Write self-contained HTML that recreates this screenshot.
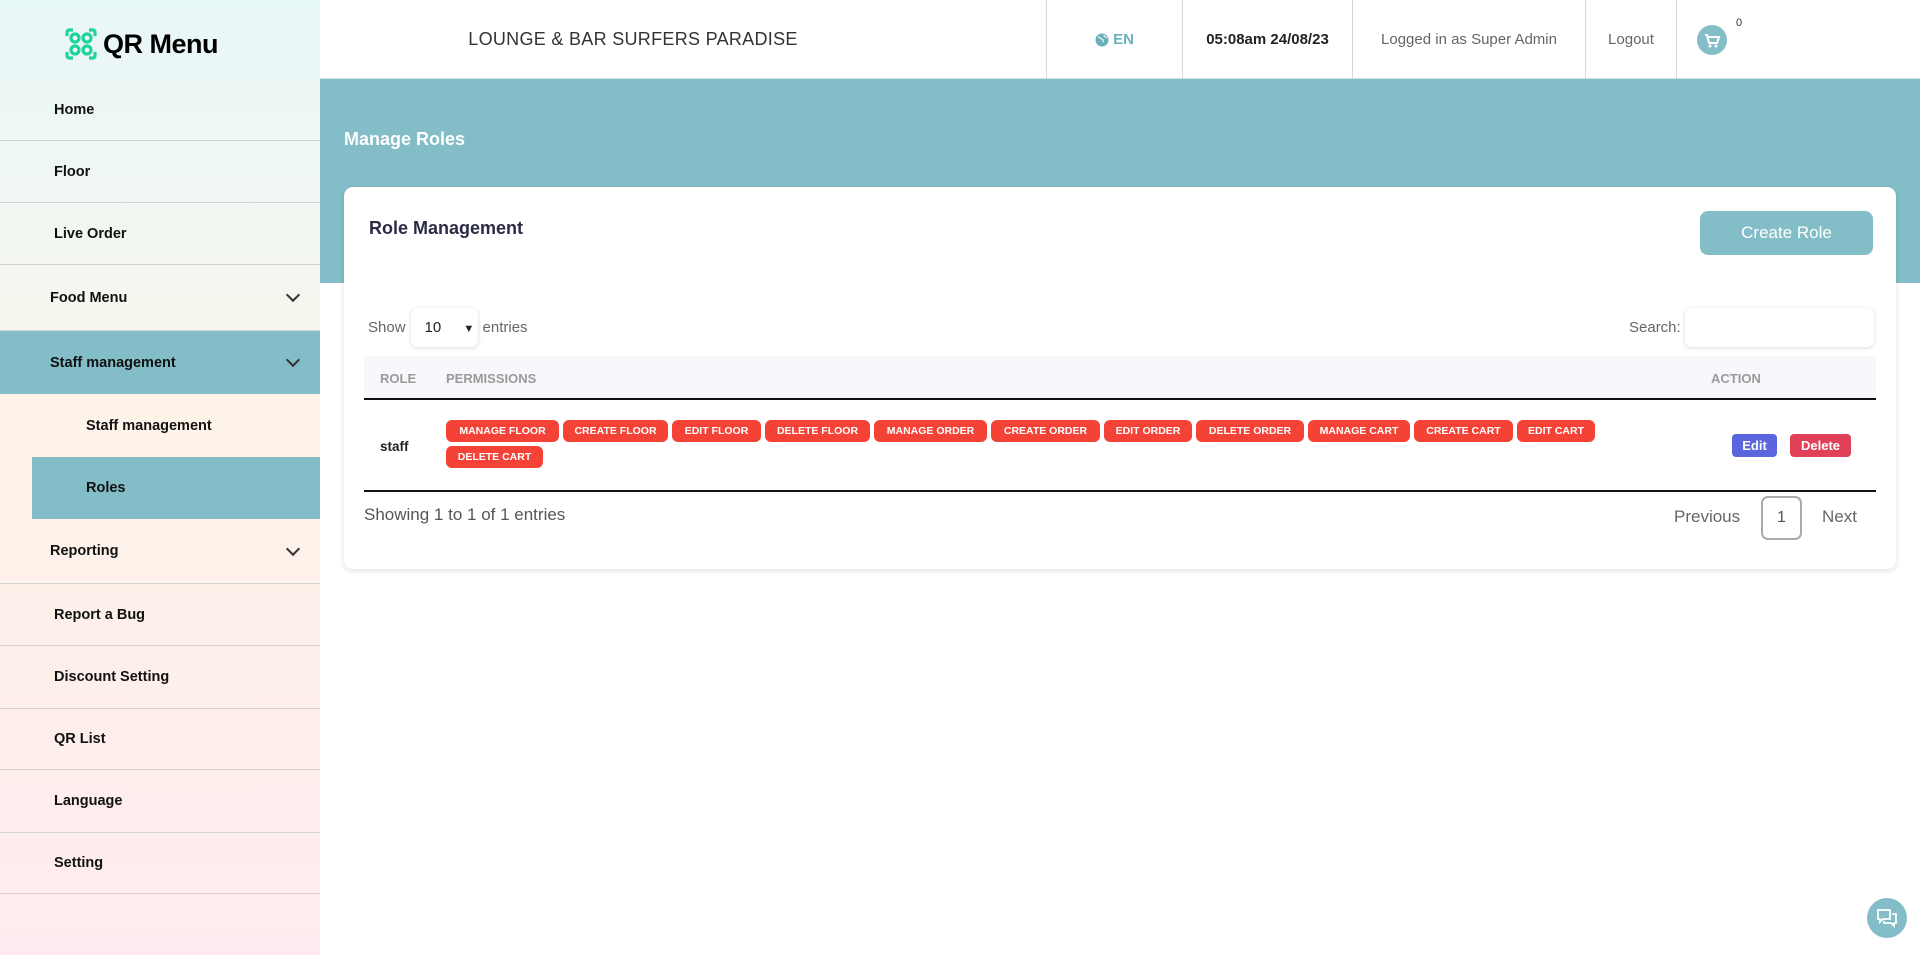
<!DOCTYPE html>
<html><head><meta charset="utf-8"><style>
*{box-sizing:border-box;margin:0;padding:0}
body{width:1920px;height:955px;overflow:hidden;font-family:"Liberation Sans",sans-serif;background:#fff;position:relative}
.sb{position:absolute;left:0;top:0;width:320px;height:955px;background:linear-gradient(#e8f7f8 0%,#f4f7ef 30%,#fdf4ea 45%,#fdefea 70%,#ffebef 100%)}
.logo{position:absolute;left:65px;top:28px;font-size:27px;font-weight:900;color:#000;display:flex;align-items:center;gap:6px;letter-spacing:-0.5px}
.it{position:absolute;left:0;width:320px;border-bottom:1px solid #d4d4d4;font-size:14.5px;font-weight:600;color:#111;display:flex;align-items:center;padding-left:54px}
.it.d{padding-left:50px}
.chev{position:absolute;left:288px;width:10px;height:10px;border-right:2px solid #333;border-bottom:2px solid #333;transform:rotate(45deg);margin-top:-5px}
.hdr{position:absolute;left:320px;top:0;width:1600px;height:79px;border-bottom:1px solid #cfdfe2;background:#fff}
.hc{position:absolute;top:0;height:79px;display:flex;align-items:center;justify-content:center;font-size:15px;border-left:1px solid #d5d9dc}
.band{position:absolute;left:320px;top:79px;width:1600px;height:204px;background:#83bdc7}
.card{position:absolute;left:344px;top:187px;width:1552px;height:382px;background:#fff;border-radius:9px;box-shadow:0 2px 6px rgba(0,0,0,.12)}
.bd{display:inline-block;height:22px;line-height:22px;background:#f44336;color:#fff;font-size:10.5px;font-weight:700;text-align:center;border-radius:6px;margin-right:4px;vertical-align:top}
</style></head><body>
<div class="sb">
<div class="logo"><svg width="32" height="32" viewBox="0 0 32 32" fill="none" stroke="#1fd39a" stroke-width="3.2"><circle cx="10" cy="10" r="4"/><circle cx="22" cy="10" r="4"/><circle cx="10" cy="22" r="4"/><circle cx="22" cy="22" r="4"/><path d="M2 8V4a2 2 0 0 1 2-2h4M24 2h4a2 2 0 0 1 2 2v4M30 24v4a2 2 0 0 1-2 2h-4M8 30H4a2 2 0 0 1-2-2v-4"/></svg>QR Menu</div>
<div class="it" style="top:79px;height:62px">Home</div>
<div class="it" style="top:141px;height:62px">Floor</div>
<div class="it" style="top:203px;height:62px">Live Order</div>
<div class="it d" style="top:265px;height:66px">Food Menu<span class="chev"></span></div>
<div class="it d" style="top:331px;height:63px;background:#83bdc7;border:none">Staff management<span class="chev"></span></div>
<div class="it" style="top:394px;height:63px;padding-left:86px;background:#fdf3e8;border:none">Staff management</div>
<div class="it" style="top:457px;height:62px;left:32px;width:288px;padding-left:54px;background:#83bdc7;border:none">Roles</div>
<div class="it d" style="top:519px;height:65px">Reporting<span class="chev"></span></div>
<div class="it" style="top:584px;height:62px">Report a Bug</div>
<div class="it" style="top:646px;height:63px">Discount Setting</div>
<div class="it" style="top:709px;height:61px">QR List</div>
<div class="it" style="top:770px;height:63px">Language</div>
<div class="it" style="top:833px;height:61px">Setting</div>
</div>
<div class="hdr">
<div style="position:absolute;left:0;width:626px;top:0;height:79px;display:flex;align-items:center;justify-content:center;font-size:18px;color:#333;letter-spacing:.3px">LOUNGE &amp; BAR SURFERS PARADISE</div>
<div class="hc" style="left:726px;width:136px;color:#6ab0bd;font-weight:600"><svg width="14" height="14" viewBox="0 0 14 14" style="margin-right:4px"><circle cx="7" cy="7" r="6.5" fill="#6ab0bd"/><path d="M3 4c2 0 2 2 4 2s0 3 2 3M9 2c0 2 2 2 3 3" stroke="#fff" fill="none"/></svg>EN</div>
<div class="hc" style="left:862px;width:170px;color:#222;font-weight:600">05:08am 24/08/23</div>
<div class="hc" style="left:1032px;width:233px;color:#666">Logged in as Super Admin</div>
<div class="hc" style="left:1265px;width:91px;color:#666">Logout</div>
<div class="hc" style="left:1356px;width:244px;justify-content:flex-start;padding-left:20px"><svg width="30" height="30" viewBox="0 0 30 30"><circle cx="15" cy="15" r="15" fill="#83bdc7"/><path d="M8 10h2l2 8h8l2-6H11" stroke="#fff" stroke-width="2" fill="none"/><circle cx="13" cy="21" r="1.5" fill="#fff"/><circle cx="19" cy="21" r="1.5" fill="#fff"/></svg><span style="position:absolute;left:59px;top:17px;font-size:11px;color:#333">0</span></div>
</div>
<div class="band"></div>
<div style="position:absolute;left:344px;top:129px;color:#fff;font-size:18px;font-weight:700">Manage Roles</div>
<div class="card">
<div style="position:absolute;left:25px;top:31px;font-size:18px;font-weight:600;color:#2b2b45">Role Management</div>
<div style="position:absolute;left:1356px;top:24px;width:173px;height:44px;background:#83bdc7;border-radius:8px;color:#fff;font-size:17px;display:flex;align-items:center;justify-content:center">Create Role</div>
<div style="position:absolute;left:24px;top:121px;font-size:15px;color:#666;display:flex;align-items:center">Show<span style="display:inline-block;width:67px;height:39px;margin:0 5px;border-radius:7px;box-shadow:0 1px 4px rgba(0,0,0,.15);line-height:39px;padding-left:14px;color:#222">10 <span style="margin-left:18px;font-size:11px">▼</span></span>entries</div>
<div style="position:absolute;left:1285px;top:121px;font-size:15px;color:#666;display:flex;align-items:center">Search:<span style="display:inline-block;width:189px;height:39px;margin-left:4px;border-radius:7px;box-shadow:0 1px 4px rgba(0,0,0,.15)"></span></div>
<div style="position:absolute;left:20px;top:169px;width:1512px;height:44px;background:#f7f8fb;border-bottom:2px solid #111;font-size:13px;font-weight:700;color:#9a9a9a"><span style="position:absolute;left:16px;top:15px">ROLE</span><span style="position:absolute;left:82px;top:15px">PERMISSIONS</span><span style="position:absolute;left:1347px;top:15px">ACTION</span></div>
<div style="position:absolute;left:36px;top:252px;font-size:13.5px;font-weight:600;color:#222">staff</div>
<div style="position:absolute;left:102px;top:233px;width:1220px;line-height:0;white-space:nowrap">
<span class="bd" style="width:113px">MANAGE FLOOR</span><span class="bd" style="width:105px">CREATE FLOOR</span><span class="bd" style="width:89px">EDIT FLOOR</span><span class="bd" style="width:105px">DELETE FLOOR</span><span class="bd" style="width:113px">MANAGE ORDER</span><span class="bd" style="width:109px">CREATE ORDER</span><span class="bd" style="width:88px">EDIT ORDER</span><span class="bd" style="width:108px">DELETE ORDER</span><span class="bd" style="width:102px">MANAGE CART</span><span class="bd" style="width:99px">CREATE CART</span><span class="bd" style="width:78px">EDIT CART</span><br><span class="bd" style="width:97px;margin-top:4px">DELETE CART</span></div>
<div style="position:absolute;left:1388px;top:247px;width:45px;height:23px;background:#5b66de;border-radius:4px;color:#fff;font-size:13px;font-weight:700;text-align:center;line-height:23px">Edit</div>
<div style="position:absolute;left:1446px;top:247px;width:61px;height:23px;background:#e04058;border-radius:4px;color:#fff;font-size:13px;font-weight:700;text-align:center;line-height:23px">Delete</div>
<div style="position:absolute;left:20px;top:303px;width:1512px;height:2px;background:#111"></div>
<div style="position:absolute;left:20px;top:318px;font-size:17px;color:#555">Showing 1 to 1 of 1 entries</div>
<div style="position:absolute;left:1330px;top:320px;font-size:17px;color:#666">Previous</div>
<div style="position:absolute;left:1417px;top:309px;width:41px;height:44px;border:2px solid #aaa;border-radius:7px;font-size:16px;color:#555;text-align:center;line-height:40px">1</div>
<div style="position:absolute;left:1478px;top:320px;font-size:17px;color:#666">Next</div>
</div>
<svg style="position:absolute;left:1867px;top:898px" width="40" height="40" viewBox="0 0 40 40"><circle cx="20" cy="20" r="20" fill="#83bdc7"/><path d="M11 12h12v9h-7l-3 3v-3h-2zM25 16h4v9h-2v3l-3-3h-7v-2" stroke="#fff" stroke-width="1.8" fill="none"/></svg>
</body></html>
